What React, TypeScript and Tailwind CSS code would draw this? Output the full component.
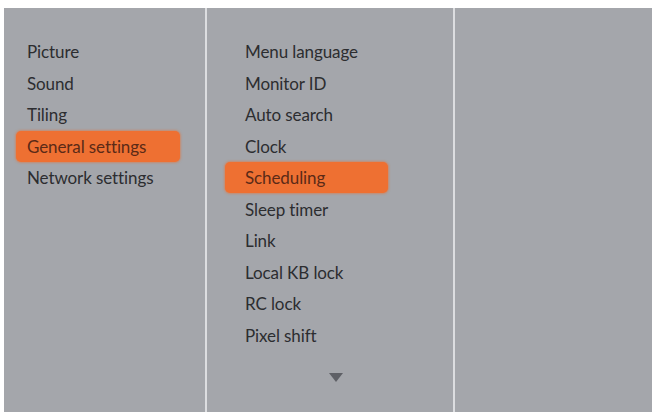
import React from "react";

const mainItems = ["Picture", "Sound", "Tiling", "General settings", "Network settings"];
const subItems = [
  "Menu language",
  "Monitor ID",
  "Auto search",
  "Clock",
  "Scheduling",
  "Sleep timer",
  "Link",
  "Local KB lock",
  "RC lock",
  "Pixel shift",
];

function Row({ label, active, boxClass, textClass }: { label: string; active: boolean; boxClass: string; textClass: string }) {
  return (
    <div className="h-[31.5px] flex items-center">
      <div
        className={
          "h-[31px] flex items-center rounded-[5px] " +
          boxClass +
          (active ? " bg-[#ee7032] shadow-[0_0_2px_1px_rgba(238,112,50,0.5)]" : "")
        }
      >
        <span
          className={
            "text-[17px] leading-none tracking-[-0.1px] " +
            textClass +
            (active ? " text-[#5b2a17]" : " text-[#2c2d30]")
          }
        >
          {label}
        </span>
      </div>
    </div>
  );
}

export default function App() {
  return (
    <div
      className="w-[654px] h-[418px] bg-white pt-[8px] pl-[4px]"
      style={{ fontFamily: "Lato, 'Open Sans', sans-serif" }}
    >
      <div className="w-[648px] h-[404px] bg-[#a4a6ab] flex">
        <div className="w-[201px] pt-[28px]">
          {mainItems.map((m) => (
            <Row
              key={m}
              label={m}
              active={m === "General settings"}
              boxClass="ml-[12px] w-[164px]"
              textClass="pl-[11px]"
            />
          ))}
        </div>
        <div className="w-[2px] bg-[#dcdde0]" />
        <div className="w-[246px] pt-[28px] flex flex-col">
          {subItems.map((s) => (
            <Row
              key={s}
              label={s}
              active={s === "Scheduling"}
              boxClass="ml-[18px] w-[163px]"
              textClass="pl-[20px]"
            />
          ))}
          <div className="flex justify-start pl-[122px] pt-[22px]">
            <svg width="14" height="9" viewBox="0 0 14 9">
              <path d="M0 0 H14 L7 9 Z" fill="#5e6066" />
            </svg>
          </div>
        </div>
        <div className="w-[2px] bg-[#dcdde0]" />
        <div className="flex-1" />
      </div>
    </div>
  );
}
